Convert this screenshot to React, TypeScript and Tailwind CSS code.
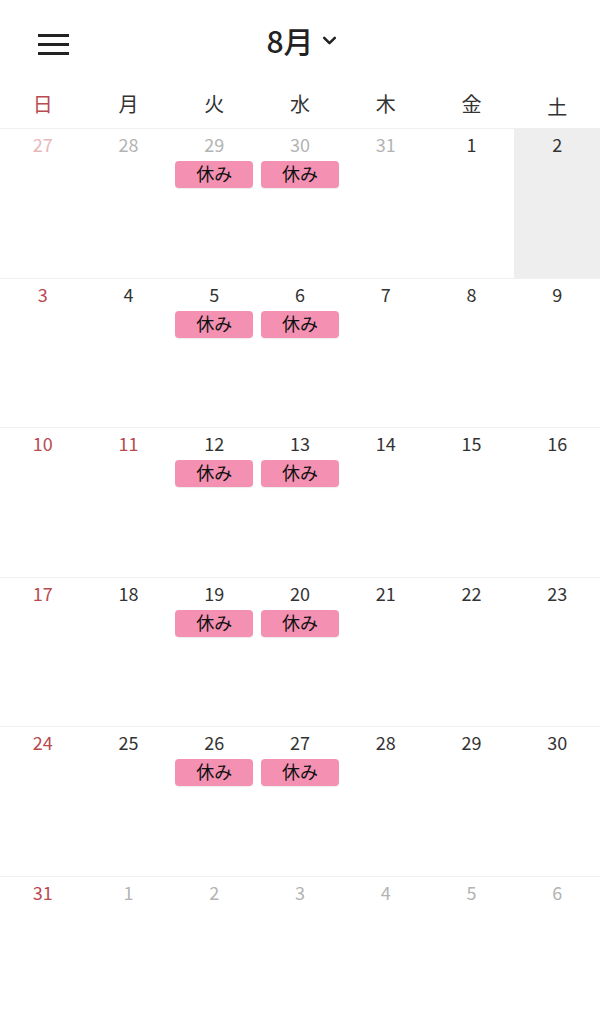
import React from 'react';

type Day = { n: number; muted?: boolean; off?: boolean; selected?: boolean; holiday?: boolean };

const weekdays = ['日', '月', '火', '水', '木', '金', '土'];

const weeks: Day[][] = [
  [{ n: 27, muted: true }, { n: 28, muted: true }, { n: 29, muted: true, off: true }, { n: 30, muted: true, off: true }, { n: 31, muted: true }, { n: 1 }, { n: 2, selected: true }],
  [{ n: 3 }, { n: 4 }, { n: 5, off: true }, { n: 6, off: true }, { n: 7 }, { n: 8 }, { n: 9 }],
  [{ n: 10 }, { n: 11, holiday: true }, { n: 12, off: true }, { n: 13, off: true }, { n: 14 }, { n: 15 }, { n: 16 }],
  [{ n: 17 }, { n: 18 }, { n: 19, off: true }, { n: 20, off: true }, { n: 21 }, { n: 22 }, { n: 23 }],
  [{ n: 24 }, { n: 25 }, { n: 26, off: true }, { n: 27, off: true }, { n: 28 }, { n: 29 }, { n: 30 }],
  [{ n: 31 }, { n: 1, muted: true }, { n: 2, muted: true }, { n: 3, muted: true }, { n: 4, muted: true }, { n: 5, muted: true }, { n: 6, muted: true }],
];

const font = { fontFamily: '"Noto Sans CJK JP", "Noto Sans", sans-serif' };

const App = () => {
  return (
    <div className="w-[600px] h-[1018px] overflow-hidden bg-white text-[#222]" style={font}>
      <header className="relative h-[85px] flex items-center justify-center">
        <button className="absolute left-[38px] top-[34px] flex flex-col gap-[6px]">
          <span className="block w-[31px] h-[3px] bg-[#222]" />
          <span className="block w-[31px] h-[3px] bg-[#222]" />
          <span className="block w-[31px] h-[3px] bg-[#222]" />
        </button>
        <div className="flex items-center gap-[7px] ml-[4px] mb-[6px]">
          <span className="text-[30px] font-medium leading-none">8月</span>
          <svg width="17" height="17" viewBox="0 0 16 16" className="mt-[2px]">
            <path d="M3 5.5l5 5 5-5" fill="none" stroke="#222" strokeWidth="2.4" strokeLinecap="round" strokeLinejoin="round" />
          </svg>
        </div>
      </header>

      <div className="grid grid-cols-7 h-[43px] items-center">
        {weekdays.map((w, i) => (
          <div key={w} className={`text-center text-[20px] leading-none mb-[6px] ${i === 0 ? 'text-[#b94a50]' : 'text-[#333]'} ${i === 6 ? 'mt-[6px]' : ''}`}>
            {w}
          </div>
        ))}
      </div>

      <div>
        {weeks.map((week, wi) => (
          <div key={wi} className="grid grid-cols-7 h-[149.6px] border-t border-[#efefef]">
            {week.map((d, di) => {
              let color = 'text-[#333]';
              if (di === 0) color = d.muted ? 'text-[#e8b7bb]' : 'text-[#b94a50]';
              else if (d.holiday) color = 'text-[#b94a50]';
              else if (d.muted) color = 'text-[#b3b3b3]';
              return (
                <div key={di} className={`flex flex-col items-stretch pt-[4px] ${d.selected ? 'bg-[#eeeeee]' : ''}`}>
                  <div className={`text-center text-[18px] leading-[22px] ${color}`}>{d.n}</div>
                  {d.off && (
                    <div className="mx-[4px] mt-[6px] h-[27px] rounded-[4px] bg-[#f490b2] text-[#111] text-[18px] leading-[25px] text-center shadow-[0_1px_1px_rgba(0,0,0,0.08)]">
                      休み
                    </div>
                  )}
                </div>
              );
            })}
          </div>
        ))}
      </div>
    </div>
  );
};

export default App;
